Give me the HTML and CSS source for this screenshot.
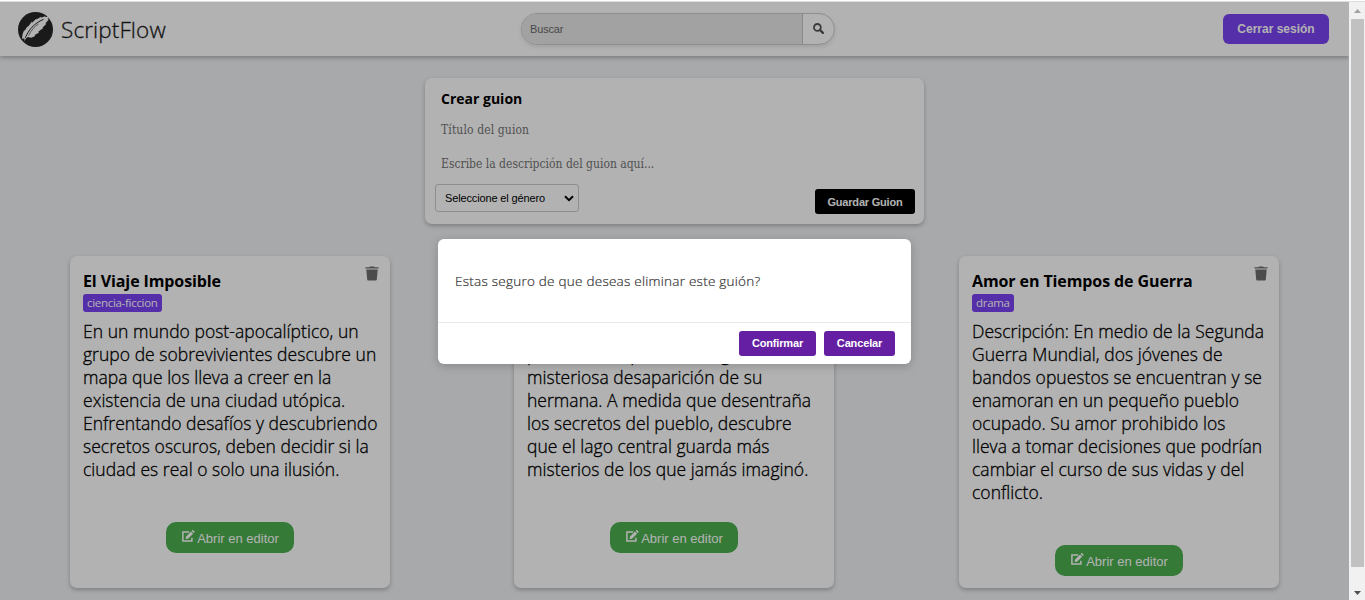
FILE: index.html
```html
<!DOCTYPE html>
<html lang="es">
<head>
<meta charset="utf-8">
<title>ScriptFlow</title>
<link rel="stylesheet" href="styles.css">
</head>
<body>
<svg class="defs" width="0" height="0">
  <symbol id="edit" viewBox="0 0 14 13">
    <path d="M8.2 2H1.900v9h9V7.800" fill="none" stroke="currentColor" stroke-width="1.500"/>
    <path d="M4.600 9.100l.3-2.400L10 1.600l2.100 2.100L7 8.800z" fill="currentColor"/>
    <path d="M10.600 1l.7-.7c.3-.3.7-.3 1 0l1.100 1.100c.3.3.3.7 0 1l-.7.7z" fill="currentColor"/>
  </symbol>
  <symbol id="trash" viewBox="0 0 14 15">
    <path d="M.5 1.200h3.800L5 .4h4l.7.8h3.800v1.200H.5zM1.300 3.400h11.400l-.9 10.100c0 .5-.4.900-.9.900H3.100c-.5 0-.9-.4-.9-.9z" fill="currentColor"/>
  </symbol>
</svg>
<div class="window">
  <div class="page">
    <header class="navbar">
      <div class="brand">
        <svg class="logo" viewBox="0 0 35 35">
          <circle cx="17.500" cy="17.500" r="17.500" fill="#262626"/>
          <path d="M6.800 29.500L6.300 26.300 4.200 27C4 23 5 20.500 6.500 17.500l-.1 1.700 3.200-5.200v1.300L14 9.500v1.200L18.500 6.500l-.2 1L23.500 4.600l-.8 1.100L28 3.900l-1 1.200L31 5 29.600 7l1.200.5-3.500 4 1.100.2-4 4.100.9.300-4.800 3.500.3 1.200-3.700 1.900-.4 1.600-3.400 1.500-3.500-.7C8 25.800 7.100 27.500 6.800 29.500z" fill="#fff"/>
          <path d="M7.300 25.800C10.500 18 16 11.500 25.500 7.300" fill="none" stroke="#262626" stroke-width="1"/>
          <path d="M10.500 23.500C13.500 17.800 16.500 14.500 20.500 12" fill="none" stroke="#262626" stroke-width=".6"/>
        </svg>
        <span class="brand-name">ScriptFlow</span>
      </div>
      <div class="search">
        <span class="search-field">Buscar</span>
        <span class="search-button">
          <svg width="11" height="11" viewBox="0 0 11 11"><circle cx="4.400" cy="4.400" r="3.400" fill="none" stroke="#555" stroke-width="1.800"/><path d="M6.900 6.900l3 3" stroke="#555" stroke-width="2.200" stroke-linecap="round"/></svg>
        </span>
      </div>
      <button class="logout">Cerrar sesión</button>
    </header>

    <section class="composer">
      <h2 class="composer-title">Crear guion</h2>
      <div class="placeholder title">Título del guion</div>
      <div class="placeholder description">Escribe la descripción del guion aquí...</div>
      <div class="composer-actions">
        <div class="select"><span>Seleccione el género</span>
          <svg width="10" height="7" viewBox="0 0 10 7"><path d="M1 1.200l4 4 4-4" fill="none" stroke="#000" stroke-width="2"/></svg>
        </div>
        <button class="save">Guardar Guion</button>
      </div>
    </section>

    <main class="scripts">
      <article class="card">
        <svg class="trash" width="14" height="15"><use href="#trash"/></svg>
        <h3 class="card-title">El Viaje Imposible</h3>
        <span class="tag">ciencia-ficcion</span>
        <p class="card-text">En un mundo post-apocalíptico, un<br>grupo de sobrevivientes descubre un<br>mapa que los lleva a creer en la<br>existencia de una ciudad utópica.<br>Enfrentando desafíos y descubriendo<br>secretos oscuros, deben decidir si la<br>ciudad es real o solo una ilusión.</p>
        <button class="open"><svg width="14" height="13"><use href="#edit"/></svg>Abrir en editor</button>
      </article>
      <article class="card middle">
        <p class="card-text">pueblo natal para investigar la<br>misteriosa desaparición de su<br>hermana. A medida que desentraña<br>los secretos del pueblo, descubre<br>que el lago central guarda más<br>misterios de los que jamás imaginó.</p>
        <button class="open"><svg width="14" height="13"><use href="#edit"/></svg>Abrir en editor</button>
      </article>
      <article class="card">
        <svg class="trash" width="14" height="15"><use href="#trash"/></svg>
        <h3 class="card-title">Amor en Tiempos de Guerra</h3>
        <span class="tag">drama</span>
        <p class="card-text">Descripción: En medio de la Segunda<br>Guerra Mundial, dos jóvenes de<br>bandos opuestos se encuentran y se<br>enamoran en un pequeño pueblo<br>ocupado. Su amor prohibido los<br>lleva a tomar decisiones que podrían<br>cambiar el curso de sus vidas y del<br>conflicto.</p>
        <button class="open"><svg width="14" height="13"><use href="#edit"/></svg>Abrir en editor</button>
      </article>
    </main>

    <div class="overlay">
      <div class="dialog">
        <p class="dialog-text">Estas seguro de que deseas eliminar este guión?</p>
        <div class="dialog-actions">
          <button class="dialog-button confirm">Confirmar</button>
          <button class="dialog-button cancel">Cancelar</button>
        </div>
      </div>
    </div>
  </div>
  <div class="scrollbar">
    <svg width="7" height="4" viewBox="0 0 7 4"><path d="M0 4L3.500 0 7 4z" fill="#a3a3a3"/></svg>
    <div class="thumb"></div>
    <svg width="7" height="4" viewBox="0 0 7 4"><path d="M0 0h7L3.500 4z" fill="#505050"/></svg>
  </div>
</div>
</body>
</html>
```

FILE: styles.css
```css
* { box-sizing: border-box; }
body {
  margin: 0;
  height: 600px;
  overflow: hidden;
  background: #fff;
  border-top: 1px solid #fff;
  font-family: "Open Sans", "Noto Sans", sans-serif;
}
button { border: 0; padding: 0; font-family: "Liberation Sans", Arial, sans-serif; color: #fff; }
h2, h3, p { margin: 0; }
.defs { position: absolute; }

.window { display: flex; height: 599px; border-top: 1px solid #dcdddf; }
.page { position: relative; width: 1349px; height: 598px; background: #f0f2f5; overflow: hidden; }

.navbar {
  display: grid;
  grid-template-columns: 503px 314px 1fr;
  align-items: center;
  height: 54px;
  padding: 0 20px 0 18px;
  background: #fff;
  box-shadow: 0 2px 4px rgba(0, 0, 0, .25);
}
.brand { display: flex; align-items: center; gap: 8px; }
.logo { width: 35px; height: 35px; }
.brand-name {
  padding-top: 2px;
  font-size: 22.500px;
  line-height: 30px;
  font-weight: 300;
  letter-spacing: .12px;
  color: #1c1c1c;
  -webkit-text-stroke: .3px #1c1c1c;
}
.search {
  display: flex;
  width: 314px;
  height: 32px;
  border: 1px solid #ccc;
  border-radius: 16px;
  overflow: hidden;
  background: #fff;
  box-shadow: 0 2px 4px rgba(0, 0, 0, .1);
}
.search-field {
  width: 281px;
  padding-left: 8px;
  background: #e9e9e9;
  border-right: 1px solid #c4c4c4;
  font: 11px/31px "Liberation Sans", Arial, sans-serif;
  letter-spacing: -.15px;
  color: #6a6a6a;
}
.search-button { flex: 1; display: flex; align-items: center; justify-content: center; padding-bottom: 2px; }
.logout {
  justify-self: end;
  width: 106px;
  height: 30px;
  border-radius: 6px;
  background: #7a42f4;
  font-size: 12px;
  font-weight: bold;
}

.composer {
  width: 499px;
  height: 146px;
  margin: 22px 0 0 425px;
  padding: 10px 9px 0 10px;
  border-radius: 7px;
  background: #fff;
  box-shadow: 0 2px 4px rgba(0, 0, 0, .25);
}
.composer-title { padding-left: 6px; font-size: 14px; line-height: 22px; font-weight: 700; }
.placeholder {
  padding: 11px 0 0 6px;
  font-family: "DejaVu Serif Condensed", "DejaVu Serif", serif;
  font-size: 12px;
  line-height: 18px;
  color: #757575;
}
.placeholder.title { letter-spacing: .12px; }
.description { padding-top: 16px; }
.composer-actions { display: flex; justify-content: space-between; margin-top: 11px; }
.select {
  display: flex;
  align-items: center;
  justify-content: space-between;
  width: 144px;
  height: 28px;
  padding: 0 4px 0 9px;
  border: 1px solid #ccc;
  border-radius: 3px;
  font: 11px "Liberation Sans", Arial, sans-serif;
  letter-spacing: -.14px;
}
.save { width: 100px; height: 25px; margin-top: 5px; border-radius: 3px; background: #000; font-size: 11px; font-weight: bold; letter-spacing: -.2px; }

.scripts { display: flex; justify-content: space-between; margin-top: 32px; padding: 0 70px; }
.card {
  position: relative;
  display: flex;
  flex-direction: column;
  align-items: flex-start;
  width: 320px;
  height: 332px;
  padding: 13px 13px 0;
  border-radius: 7px;
  background: #fff;
  box-shadow: 0 2px 4px rgba(0, 0, 0, .25);
}
.card.middle { margin-right: 1px; padding-top: 79px; }
.trash { position: absolute; top: 10px; right: 11px; color: #6e6e6e; }
.card-title { font-size: 16px; line-height: 25px; font-weight: 700; letter-spacing: -.1px; white-space: nowrap; }
.tag {
  height: 18px;
  padding: 0 4px;
  border-radius: 3px;
  background: #7a42f4;
  color: #fff;
  font-size: 11.500px;
  line-height: 18px;
  letter-spacing: -.3px;
}
.card-text {
  margin-top: 8px;
  font-size: 17.500px;
  font-weight: 300;
  line-height: 23px;
  letter-spacing: .03px;
  white-space: nowrap;
  -webkit-text-stroke: .3px #000;
}
.open {
  display: flex;
  flex: none;
  align-items: center;
  justify-content: center;
  align-self: center;
  gap: 2px;
  width: 128px;
  height: 31px;
  margin-top: 41px;
  border-radius: 10px;
  background: #4caf50;
  font-size: 13px;
  line-height: 15px;
  padding-top: 1px;
}
.open svg { margin-bottom: 3px; }

.overlay { position: absolute; inset: 0; background: rgba(0, 0, 0, .3); }
.dialog {
  width: 473px;
  height: 125px;
  margin: 237px 0 0 438px;
  border-radius: 6px;
  background: #fff;
  box-shadow: 0 2px 10px rgba(0, 0, 0, .2);
}
.dialog-text {
  height: 83px;
  padding: 31px 17px 0;
  font-size: 13.500px;
  font-weight: 300;
  line-height: 23px;
  letter-spacing: .25px;
  color: #333;
  -webkit-text-stroke: .2px #333;
}
.dialog-actions {
  display: flex;
  justify-content: flex-end;
  gap: 8px;
  padding: 8px 16px;
  border-top: 1px solid #e9e9e9;
}
.dialog-button {
  height: 25px;
  padding-bottom: 1px;
  border-radius: 3px;
  background: #651fa2;
  font-size: 11px;
  font-weight: bold;
  letter-spacing: -.15px;
}
.confirm { width: 77px; }
.cancel { width: 71px; }

.scrollbar { display: flex; flex-direction: column; align-items: center; width: 16px; padding: 7px 0 5px 1px; background: #f1f1f1; }
.thumb { width: 13px; height: 548px; margin: 6px 0 auto; background: #c1c1c1; }
```
